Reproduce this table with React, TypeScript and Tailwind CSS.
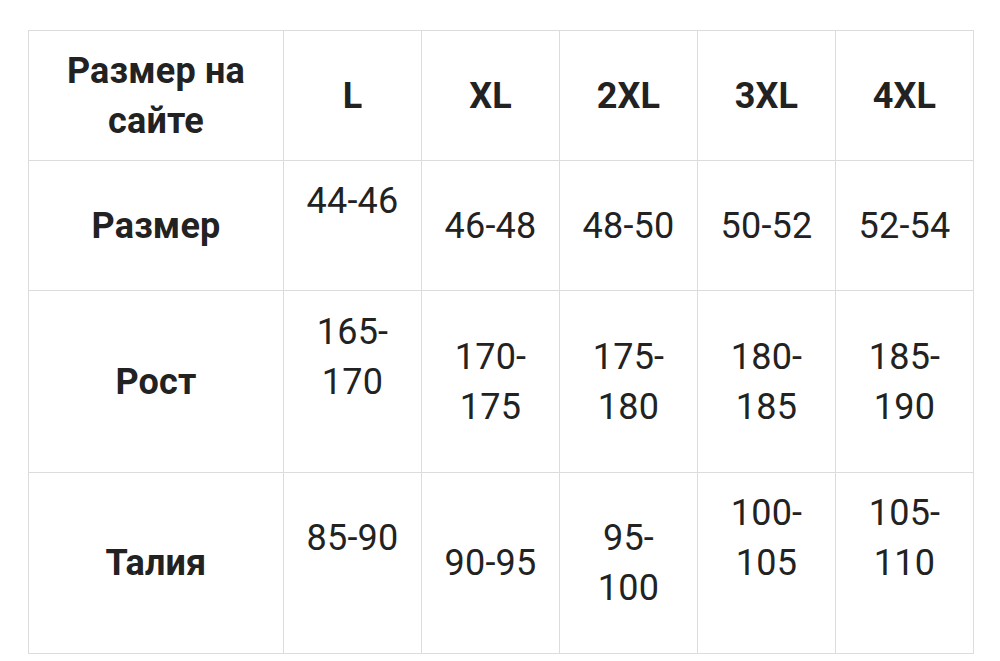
import React from 'react';

type Cell = { lines: string[]; pad?: boolean };

const header = ['L', 'XL', '2XL', '3XL', '4XL'];

const rows: { label: string; height: string; cells: Cell[] }[] = [
  {
    label: 'Размер',
    height: 'h-[130px]',
    cells: [
      { lines: ['44-46'], pad: true },
      { lines: ['46-48'] },
      { lines: ['48-50'] },
      { lines: ['50-52'] },
      { lines: ['52-54'] },
    ],
  },
  {
    label: 'Рост',
    height: 'h-[182px]',
    cells: [
      { lines: ['165-', '170'], pad: true },
      { lines: ['170-', '175'] },
      { lines: ['175-', '180'] },
      { lines: ['180-', '185'] },
      { lines: ['185-', '190'] },
    ],
  },
  {
    label: 'Талия',
    height: 'h-[181px]',
    cells: [
      { lines: ['85-90'], pad: true },
      { lines: ['90-95'] },
      { lines: ['95-', '100'] },
      { lines: ['100-', '105'], pad: true },
      { lines: ['105-', '110'], pad: true },
    ],
  },
];

function Lines({ lines, pad }: Cell) {
  return (
    <div className="flex flex-col items-center">
      {lines.map((l) => (
        <span key={l} className="block h-[50px] leading-[50px]">
          {l}
        </span>
      ))}
      {/* extra blank line, same as the source table */}
      {pad && <span className="block h-[50px]" />}
    </div>
  );
}

export default function App() {
  return (
    <div
      className="w-[1000px] h-[661px] bg-white pt-[30px] pl-[28px] text-[#222222] overflow-hidden"
      style={{ fontFamily: 'Roboto, "Noto Sans", sans-serif' }}
    >
      <table className="table-fixed border-collapse w-[945px] text-[36px] tracking-[0.2px] text-center">
        <colgroup>
          <col className="w-[255px]" />
          <col className="w-[138px]" />
          <col className="w-[138px]" />
          <col className="w-[138px]" />
          <col className="w-[138px]" />
          <col className="w-[138px]" />
        </colgroup>
        <tbody>
          <tr className="h-[130px]">
            <td className="border border-[#dcdcdc] p-0 align-middle font-bold">
              <Lines lines={['Размер на', 'сайте']} />
            </td>
            {header.map((h) => (
              <td key={h} className="border border-[#dcdcdc] p-0 align-middle font-bold">
                <Lines lines={[h]} />
              </td>
            ))}
          </tr>
          {rows.map((row) => (
            <tr key={row.label} className={row.height}>
              <td className="border border-[#dcdcdc] p-0 align-middle font-bold">
                <Lines lines={[row.label]} />
              </td>
              {row.cells.map((c, i) => (
                <td key={i} className="border border-[#dcdcdc] p-0 align-middle">
                  <Lines lines={c.lines} pad={c.pad} />
                </td>
              ))}
            </tr>
          ))}
        </tbody>
      </table>
    </div>
  );
}
